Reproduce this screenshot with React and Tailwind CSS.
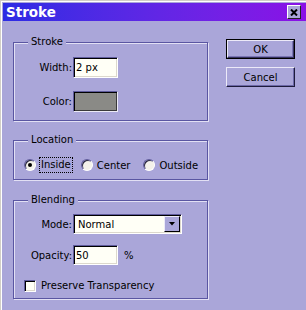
import React from "react";

// sunken edit field look
const fieldCls =
  "border border-t-[#5f5b9c] border-l-[#5f5b9c] border-r-white border-b-white shadow-[inset_1px_1px_0_#000,inset_-1px_-1px_0_#dcd8cc]";

const Group = ({ label, className, children }) => (
  <div
    className={
      "relative border border-[#5a56a2] shadow-[1px_1px_0_#e2e0f4,inset_1px_1px_0_#e2e0f4] " +
      className
    }
  >
    <span className="absolute -top-[8px] left-[14px] bg-[#aaa6d9] px-[3px] leading-[14px]">
      {label}
    </span>
    {children}
  </div>
);

const Radio = ({ checked }) => (
  <div className="w-[12px] h-[12px] rounded-full border border-t-[#5f5b9c] border-l-[#5f5b9c] border-r-white border-b-white bg-[#f4f2ea] shadow-[inset_1px_1px_0_#2a2840] flex items-center justify-center">
    {checked && <div className="w-[4px] h-[4px] rounded-full bg-black" />}
  </div>
);

const Button = ({ children, isDefault }) =>
  isDefault ? (
    <div className="w-[69px] h-[20px] border border-black">
      <div className="w-full h-full flex items-center justify-center border border-t-[#eceaf8] border-l-[#eceaf8] border-r-[#34305e] border-b-[#34305e] shadow-[inset_-1px_-1px_0_#7a76b4]">
        {children}
      </div>
    </div>
  ) : (
    <div className="w-[69px] h-[20px] flex items-center justify-center border border-t-[#eceaf8] border-l-[#eceaf8] border-r-[#1e1c3c] border-b-[#1e1c3c] shadow-[inset_-1px_-1px_0_#6c68a8]">
      {children}
    </div>
  );

const App = () => {
  return (
    <div
      className="w-[306px] h-[310px] overflow-hidden bg-[#aaa6d9] border-l border-t border-[#d2cec6] text-black text-[10px]"
      style={{ fontFamily: '"DejaVu Sans", Verdana, sans-serif' }}
    >
      <div className="h-full border-l border-t border-white pl-px pt-px">
        {/* title bar */}
        <div className="h-[18px] flex items-start justify-between bg-gradient-to-r from-[#2b2be4] to-[#8a0fe6]">
          <span className="pl-[3px] text-[13.5px] font-bold text-white leading-[18px]">Stroke</span>
          <div className="mt-[2px] mr-[5px] w-[14px] h-[14px] bg-[#aaa6d9] border border-t-white border-l-white border-r-[#222] border-b-[#222] flex items-center justify-center">
            <svg width="8" height="7" viewBox="0 0 8 7">
              <path d="M1 0.5 L7 6.5 M7 0.5 L1 6.5" stroke="#000" strokeWidth="2" />
            </svg>
          </div>
        </div>

        <div className="flex pl-[10px] gap-[18px]">
          {/* left column */}
          <div className="w-[195px] flex flex-col">
            <Group label="Stroke" className="mt-[21px] pt-[14px] pb-[8px]">
              <div className="flex items-center">
                <span className="w-[58px] text-right">Width:</span>
                <div className={"ml-px w-[45px] h-[21px] bg-[#fffff6] pl-[2px] flex items-center " + fieldCls}>
                  2 px
                </div>
              </div>
              <div className="flex items-center mt-[13px]">
                <span className="w-[58px] text-right">Color:</span>
                <div className="ml-px w-[45px] h-[21px] bg-[#8a8a86] border border-t-[#5f5b9c] border-l-[#5f5b9c] border-r-[#eceaf6] border-b-[#eceaf6] shadow-[inset_1px_1px_0_#000,inset_-1px_-1px_0_#3a3a3a]" />
              </div>
            </Group>

            <Group label="Location" className="mt-[19px] pt-[16px] pb-[6px]">
              <div className="h-[16px] flex items-center pl-[10px]">
                <Radio checked />
                <span className="ml-[3px] px-px border border-dotted border-black leading-[14px]">Inside</span>
                <div className="ml-[8px]">
                  <Radio />
                </div>
                <span className="ml-[4px]">Center</span>
                <div className="ml-[13px]">
                  <Radio />
                </div>
                <span className="ml-[4px]">Outside</span>
              </div>
            </Group>

            <Group label="Blending" className="mt-[20px] pt-[13px] pb-[5px]">
              <div className="flex items-center">
                <span className="w-[58px] text-right">Mode:</span>
                <div className={"ml-px w-[109px] h-[20px] bg-[#fffff6] flex items-center justify-between " + fieldCls}>
                  <span className="pl-[4px]">Normal</span>
                  <div className="mr-px w-[16px] h-[16px] bg-[#aaa6d9] border border-t-[#eceaf8] border-l-[#eceaf8] border-r-black border-b-black flex items-center justify-center">
                    <svg width="6" height="4" viewBox="0 0 6 4">
                      <path d="M0 0 H6 L3 3.5 Z" fill="#000" />
                    </svg>
                  </div>
                </div>
              </div>
              <div className="flex items-center mt-[11px]">
                <span className="w-[58px] text-right">Opacity:</span>
                <div className={"ml-px w-[45px] h-[20px] bg-[#fffff6] pl-[2px] flex items-center " + fieldCls}>
                  50
                </div>
                <span className="ml-[6px]">%</span>
              </div>
              <div className="flex items-center mt-[13px] pl-[10px]">
                <div className="w-[12px] h-[12px] bg-[#fffff6] border border-t-[#5f5b9c] border-l-[#5f5b9c] border-r-white border-b-white shadow-[inset_1px_1px_0_#000,inset_-1px_-1px_0_#dcd8cc]" />
                <span className="ml-[5px]">Preserve Transparency</span>
              </div>
            </Group>
          </div>

          {/* right column */}
          <div className="flex flex-col pt-[18px] gap-[8px]">
            <Button isDefault>OK</Button>
            <Button>Cancel</Button>
          </div>
        </div>
      </div>
    </div>
  );
};

export default App;
